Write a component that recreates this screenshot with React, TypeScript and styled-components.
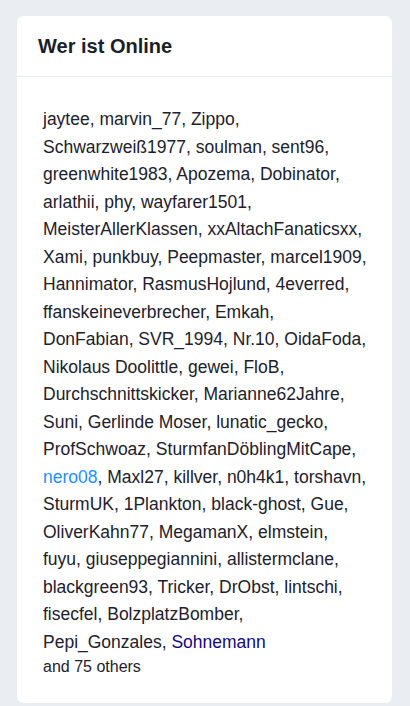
import React from "react";
import styled, { createGlobalStyle } from "styled-components";

const Global = createGlobalStyle`
  html, body { margin: 0; padding: 0; background: #eaeef3; }
  body { font-family: "Liberation Sans", Arial, sans-serif; }
`;

const Page = styled.div`
  padding: 16px 18px 4px 17px;
`;

const Card = styled.section`
  background: #ffffff;
  border-radius: 7px;
  overflow: hidden;
`;

const Header = styled.header`
  height: 61px;
  box-sizing: border-box;
  padding: 0 21px;
  display: flex;
  align-items: center;
  border-bottom: 1px solid #e8ebef;
`;

const Title = styled.h2`
  margin: 0;
  font-size: 20px;
  font-weight: 700;
  color: #1b1f2a;
`;

const Body = styled.div`
  padding: 29px 24px 25px 26px;
`;

const Names = styled.div`
  font-size: 17.5px;
  line-height: 27.5px;
  color: #1c212d;
`;

const Name = styled.span<{ $tone?: "link" | "mod" }>`
  color: ${(p) => (p.$tone === "link" ? "#1e90ff" : p.$tone === "mod" ? "#14087f" : "inherit")};
`;

const Others = styled.div`
  font-size: 16px;
  line-height: 22px;
  color: #1c212d;
`;

const names: { n: string; t?: "link" | "mod" }[] = [
  "jaytee", "marvin_77", "Zippo", "Schwarzweiß1977", "soulman", "sent96",
  "greenwhite1983", "Apozema", "Dobinator", "arlathii", "phy", "wayfarer1501",
  "MeisterAllerKlassen", "xxAltachFanaticsxx", "Xami", "punkbuy", "Peepmaster",
  "marcel1909", "Hannimator", "RasmusHojlund", "4everred", "ffanskeineverbrecher",
  "Emkah", "DonFabian", "SVR_1994", "Nr.10", "OidaFoda", "Nikolaus Doolittle",
  "gewei", "FloB", "Durchschnittskicker", "Marianne62Jahre", "Suni",
  "Gerlinde Moser", "lunatic_gecko", "ProfSchwoaz", "SturmfanDöblingMitCape",
].map((n) => ({ n }))
  .concat([{ n: "nero08", t: "link" as const }])
  .concat(
    [
      "Maxl27", "killver", "n0h4k1", "torshavn", "SturmUK", "1Plankton",
      "black-ghost", "Gue", "OliverKahn77", "MegamanX", "elmstein", "fuyu",
      "giuseppegiannini", "allistermclane", "blackgreen93", "Tricker", "DrObst",
      "lintschi", "fisecfel", "BolzplatzBomber", "Pepi_Gonzales",
    ].map((n) => ({ n }))
  )
  .concat([{ n: "Sohnemann", t: "mod" as const }]);

export default function App() {
  return (
    <Page>
      <Global />
      <Card>
        <Header>
          <Title>Wer ist Online</Title>
        </Header>
        <Body>
          <Names>
            {names.map((x, i) => (
              <React.Fragment key={i}>
                <Name $tone={x.t}>{x.n}</Name>
                {i < names.length - 1 ? ", " : ""}
              </React.Fragment>
            ))}
          </Names>
          <Others>and 75 others</Others>
        </Body>
      </Card>
    </Page>
  );
}
